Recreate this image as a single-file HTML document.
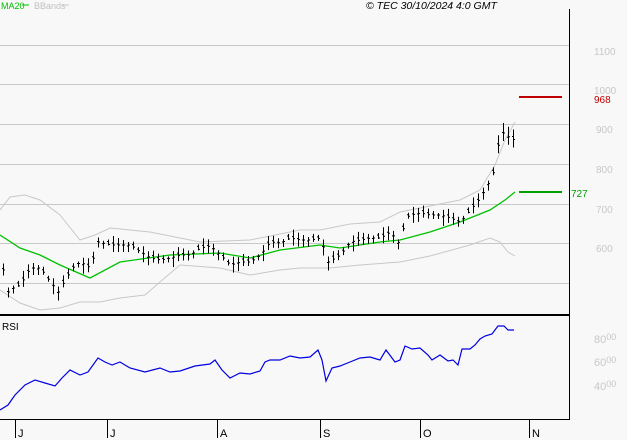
<!DOCTYPE html><html><head><style>
body{margin:0;background:#f8f8f8;width:627px;height:440px;overflow:hidden;font-family:"Liberation Sans",sans-serif}
</style></head><body>
<svg id="s" width="627" height="440" xmlns="http://www.w3.org/2000/svg" style="position:absolute;left:0;top:0">
<rect width="627" height="440" fill="#f8f8f8"/>
<g stroke="#c8c8c8" stroke-width="1">
<line x1="0" y1="45.5" x2="569" y2="45.5"/><line x1="0" y1="84.5" x2="569" y2="84.5"/>
<line x1="0" y1="124.5" x2="569" y2="124.5"/><line x1="0" y1="164.5" x2="569" y2="164.5"/>
<line x1="0" y1="204.5" x2="569" y2="204.5"/><line x1="0" y1="243.5" x2="569" y2="243.5"/>
<line x1="0" y1="283.5" x2="569" y2="283.5"/>
</g>
<polyline id="bu" fill="none" stroke="#c8c8c8" stroke-width="1"/>
<polyline id="bl" fill="none" stroke="#c8c8c8" stroke-width="1"/>
<polyline id="ma" fill="none" stroke="#00c000" stroke-width="1.3"/>
<g id="bars" stroke="#000" stroke-width="1"></g>
<polyline id="rsi" fill="none" stroke="#0000e0" stroke-width="1.2"/>
<line x1="519" y1="97" x2="562" y2="97" stroke="#c00000" stroke-width="2"/>
<line x1="519" y1="192" x2="562" y2="192" stroke="#00a000" stroke-width="2"/>
<line x1="569.5" y1="9" x2="569.5" y2="419" stroke="#000"/>
<line x1="0" y1="315" x2="570" y2="315" stroke="#000" stroke-width="2"/>
<line x1="0" y1="419.5" x2="570" y2="419.5" stroke="#000"/>
<g stroke="#000"><line x1="15.5" y1="419" x2="15.5" y2="438"/><line x1="107.5" y1="419" x2="107.5" y2="438"/><line x1="217.5" y1="419" x2="217.5" y2="438"/><line x1="320.5" y1="419" x2="320.5" y2="438"/><line x1="420.5" y1="419" x2="420.5" y2="438"/><line x1="529.5" y1="419" x2="529.5" y2="438"/></g>
<g font-size="11" fill="#000"><text x="18" y="437">J</text><text x="110" y="437">J</text><text x="220" y="437">A</text><text x="323" y="437">S</text><text x="423" y="437">O</text><text x="532" y="437">N</text></g>
<text x="1" y="9" font-size="9" fill="#00c000">MA20</text><line x1="22" y1="5" x2="29" y2="5" stroke="#00c000"/>
<text x="34" y="9" font-size="9" fill="#c0c0c0">BBands</text><line x1="62" y1="5" x2="69" y2="5" stroke="#c8c8c8"/>
<text x="366" y="9" font-size="10.5" font-style="italic" fill="#000">© TEC 30/10/2024 4:0 GMT</text>
<g font-size="10" fill="#c8c8c8"><text x="594" y="55">1100</text>
<text x="594" y="94">1000</text>
<text x="596" y="133">900</text><text x="596" y="173">800</text><text x="596" y="213">700</text><text x="596" y="252">600</text></g>
<g font-size="11" fill="#c8c8c8">
<text x="594" y="343">80<tspan font-size="9" dy="-3">00</tspan></text>
<text x="594" y="366">60<tspan font-size="9" dy="-3">00</tspan></text>
<text x="594" y="390">40<tspan font-size="9" dy="-3">00</tspan></text></g>
<text x="594" y="103" font-size="10" fill="#c00000">968</text>
<text x="571" y="197" font-size="10" fill="#00a000">727</text>
<text x="2" y="330" font-size="10" fill="#000">RSI</text>
</svg>
<script>
function interp(pts,x){for(var i=0;i<pts.length-1;i++){if(x<=pts[i+1][0]){var a=pts[i],b=pts[i+1];return a[1]+(b[1]-a[1])*(x-a[0])/(b[0]-a[0]);}}return pts[pts.length-1][1];}
function pl(id,pts){document.getElementById(id).setAttribute('points',pts.map(function(p){return p.join(',')}).join(' '));}
var price=[[3,270],[8,292],[13,288],[20,285],[30,268],[40,268],[50,282],[58,292],[65,280],[72,268],[80,262],[90,268],[98,242],[110,245],[120,245],[130,245],[140,252],[150,258],[160,260],[170,258],[180,255],[190,255],[200,248],[210,246],[220,255],[230,265],[240,262],[250,262],[260,255],[270,242],[280,243],[290,238],[300,240],[310,240],[320,238],[328,262],[340,255],[350,242],[360,240],[370,238],[380,238],[390,232],[400,245],[405,218],[410,215],[420,213],[430,215],[440,215],[450,218],[460,222],[470,210],[480,198],[490,180],[495,168],[500,130],[505,135],[510,138],[514,140]];
pl('ma',[[0,235],[20,248],[40,255],[60,265],[90,278],[120,262],[170,255],[220,253],[250,258],[280,250],[320,245],[340,248],[380,242],[400,240],[430,232],[460,222],[490,210],[505,200],[515,192]]);
pl('bu',[[0,210],[10,197],[25,195],[40,200],[60,215],[80,240],[95,235],[110,228],[130,230],[150,232],[180,238],[200,242],[250,240],[300,230],[320,230],[350,224],[380,222],[400,212],[430,206],[460,200],[480,190],[495,165],[505,140],[515,122]]);
pl('bl',[[0,290],[20,303],[40,310],[60,308],[80,302],[100,302],[120,298],[145,295],[160,282],[180,265],[220,268],[250,275],[280,270],[300,268],[330,268],[360,265],[400,262],[430,256],[470,245],[490,238],[500,242],[508,252],[515,256]]);
pl('rsi',[[0,410],[8,405],[15,395],[25,385],[35,380],[45,383],[55,386],[62,378],[70,370],[80,375],[88,372],[98,358],[105,362],[112,365],[120,362],[130,368],[145,372],[160,368],[170,372],[180,371],[195,366],[210,364],[215,360],[222,370],[230,378],[240,373],[250,374],[260,371],[265,362],[270,360],[280,360],[290,356],[300,358],[310,357],[318,350],[322,360],[326,381],[332,368],[340,366],[350,362],[360,358],[370,357],[380,360],[386,350],[395,362],[400,360],[405,346],[412,349],[420,348],[428,355],[432,360],[440,355],[448,361],[453,360],[458,365],[462,349],[470,349],[475,345],[480,339],[485,336],[492,334],[498,326],[504,326],[508,330],[514,330]]);
var g=document.getElementById('bars'),h='';
for(var x=3;x<=514;x+=5){var c=interp(price,x),r=3+((x*7)%6),o=((x*13)%9)-4;
var hi=c-r+o/2,lo=c+r+o/2;if(x>=498){hi=c-10;lo=c+8;}
h+='<line x1="'+(x+0.5)+'" y1="'+hi+'" x2="'+(x+0.5)+'" y2="'+lo+'"/>';
h+='<line x1="'+(x-1)+'" y1="'+(c+o/2-1)+'" x2="'+x+'" y2="'+(c+o/2-1)+'"/>';
h+='<line x1="'+(x+1)+'" y1="'+c+'" x2="'+(x+2)+'" y2="'+c+'"/>';}
g.innerHTML=h;
</script>
</body></html>
